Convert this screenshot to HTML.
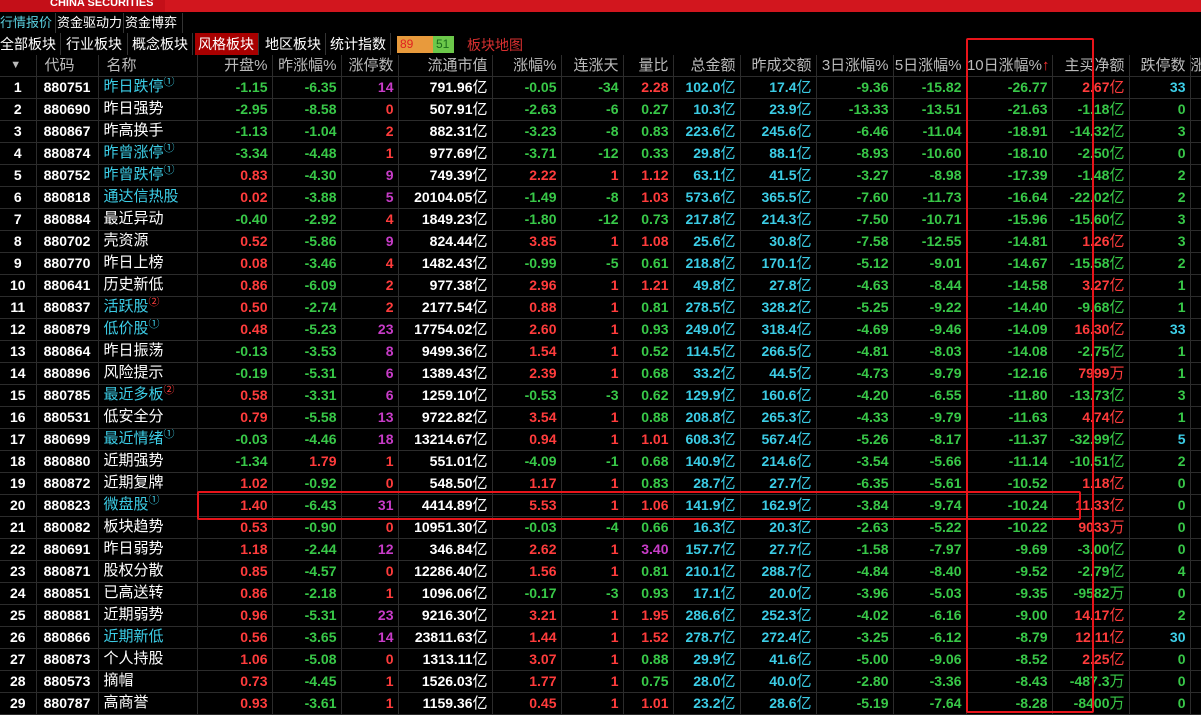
<!DOCTYPE html>
<html><head><meta charset="utf-8"><style>
*{margin:0;padding:0;box-sizing:border-box}
body{width:1201px;height:715px;background:#000;overflow:hidden;position:relative;font-family:"Liberation Sans","Noto Sans CJK SC",sans-serif;color:#fff}
.top{position:absolute;left:0;top:0;width:1201px;height:12px;background:#d2161e}
.logo{position:absolute;left:0;top:0;width:165px;height:12px;background:#c40f18;color:#fff;font-size:11px;font-weight:bold;line-height:6px;padding-left:50px;overflow:hidden}
.tabs1{position:absolute;top:13px;left:0;height:20px;font-size:13px;line-height:20px}
.tabs1 span,.tabs2 span{position:absolute;top:0;white-space:nowrap;border-right:1px solid #333;height:100%}
.tabs2{position:absolute;top:33px;left:0;height:22px;font-size:14px;line-height:22px}
table{position:absolute;top:55px;left:0;border-collapse:collapse;table-layout:fixed;width:1201px}
tr{height:22px}
td,th{border-right:1px solid #2c2c2c;border-bottom:1px solid #2c2c2c;height:22px;max-height:22px;line-height:20px;text-align:right;padding-top:0;padding-bottom:0;padding-right:4px;white-space:nowrap;overflow:hidden;font-size:14px;font-weight:bold}
th{height:21px;line-height:19px;color:#bbb;font-weight:normal;font-size:15px}
td:nth-child(1){text-align:center;padding:0}
td:nth-child(2){text-align:center;padding:0}
td:nth-child(3){text-align:left;padding-left:5px;font-weight:normal;font-size:15px}
th:nth-child(2),th:nth-child(3){text-align:left;padding-left:8px}
i{font-style:normal;font-weight:normal;font-size:15px;line-height:20px}
sup{font-size:11px;line-height:0;vertical-align:baseline;position:relative;top:-6px}
.r{color:#ff3c3c}.g{color:#38c848}.c{color:#3ccde6}.m{color:#c83cc8}
.box{position:absolute;border:2px solid #e8141a;border-radius:2px}
</style></head><body>
<div class="top"></div><div class="logo">CHINA SECURITIES</div>
<div class="tabs1"><span style="left:0;width:56px;color:#5ad0e0">行情报价</span><span style="left:57px;width:67px">资金驱动力</span><span style="left:125px;width:58px">资金博弈</span></div>
<div class="tabs2"><span style="left:0;width:61px">全部板块</span><span style="left:62px;width:66px;padding-left:4px">行业板块</span><span style="left:128px;width:65px;padding-left:4px">概念板块</span><span style="left:195px;width:64px;padding-left:3px;background:#a80000">风格板块</span><span style="left:261px;width:65px;padding-left:4px">地区板块</span><span style="left:326px;width:65px;padding-left:4px">统计指数</span></div>
<div style="position:absolute;left:397px;top:36px;width:36px;height:17px;background:#e89a3c;color:#e02020;font-size:12px;line-height:17px;padding-left:3px">89</div>
<div style="position:absolute;left:433px;top:36px;width:21px;height:17px;background:#6cc84a;color:#1a6a1a;font-size:12px;line-height:17px;padding-left:3px">51</div>
<div style="position:absolute;left:467px;top:34px;font-size:14px;line-height:22px;color:#d83030">板块地图</div>
<table>
<colgroup><col style="width:36px"><col style="width:62px"><col style="width:99px"><col style="width:75px"><col style="width:69px"><col style="width:57px"><col style="width:94px"><col style="width:69px"><col style="width:62px"><col style="width:50px"><col style="width:67px"><col style="width:76px"><col style="width:77px"><col style="width:73px"><col style="width:86px"><col style="width:77px"><col style="width:61px"><col style="width:11px"></colgroup>
<tr style="height:21px"><th style="text-align:center;font-size:11px">▼</th><th>代码</th><th>名称</th><th>开盘%</th><th>昨涨幅%</th><th>涨停数</th><th>流通市值</th><th>涨幅%</th><th>连涨天</th><th>量比</th><th>总金额</th><th>昨成交额</th><th>3日涨幅%</th><th>5日涨幅%</th><th style="padding-right:2px">10日涨幅%<span style="color:#f33">↑</span></th><th>主买净额</th><th>跌停数</th><th style="text-align:left;padding:0">涨</th></tr>
<tr><td>1</td><td>880751</td><td class="c">昨日跌停<sup>①</sup></td><td class="g">-1.15</td><td class="g">-6.35</td><td class="m">14</td><td>791.96<i>亿</i></td><td class="g">-0.05</td><td class="g">-34</td><td class="r">2.28</td><td class="c">102.0<i>亿</i></td><td class="c">17.4<i>亿</i></td><td class="g">-9.36</td><td class="g">-15.82</td><td class="g">-26.77</td><td class="r">2.67<i>亿</i></td><td class="c">33</td><td></td></tr>
<tr><td>2</td><td>880690</td><td>昨日强势</td><td class="g">-2.95</td><td class="g">-8.58</td><td class="r">0</td><td>507.91<i>亿</i></td><td class="g">-2.63</td><td class="g">-6</td><td class="g">0.27</td><td class="c">10.3<i>亿</i></td><td class="c">23.9<i>亿</i></td><td class="g">-13.33</td><td class="g">-13.51</td><td class="g">-21.63</td><td class="g">-1.18<i>亿</i></td><td class="g">0</td><td></td></tr>
<tr><td>3</td><td>880867</td><td>昨高换手</td><td class="g">-1.13</td><td class="g">-1.04</td><td class="r">2</td><td>882.31<i>亿</i></td><td class="g">-3.23</td><td class="g">-8</td><td class="g">0.83</td><td class="c">223.6<i>亿</i></td><td class="c">245.6<i>亿</i></td><td class="g">-6.46</td><td class="g">-11.04</td><td class="g">-18.91</td><td class="g">-14.32<i>亿</i></td><td class="g">3</td><td></td></tr>
<tr><td>4</td><td>880874</td><td class="c">昨曾涨停<sup>①</sup></td><td class="g">-3.34</td><td class="g">-4.48</td><td class="r">1</td><td>977.69<i>亿</i></td><td class="g">-3.71</td><td class="g">-12</td><td class="g">0.33</td><td class="c">29.8<i>亿</i></td><td class="c">88.1<i>亿</i></td><td class="g">-8.93</td><td class="g">-10.60</td><td class="g">-18.10</td><td class="g">-2.50<i>亿</i></td><td class="g">0</td><td></td></tr>
<tr><td>5</td><td>880752</td><td class="c">昨曾跌停<sup>①</sup></td><td class="r">0.83</td><td class="g">-4.30</td><td class="m">9</td><td>749.39<i>亿</i></td><td class="r">2.22</td><td class="r">1</td><td class="r">1.12</td><td class="c">63.1<i>亿</i></td><td class="c">41.5<i>亿</i></td><td class="g">-3.27</td><td class="g">-8.98</td><td class="g">-17.39</td><td class="g">-1.48<i>亿</i></td><td class="g">2</td><td></td></tr>
<tr><td>6</td><td>880818</td><td class="c">通达信热股</td><td class="r">0.02</td><td class="g">-3.88</td><td class="m">5</td><td>20104.05<i>亿</i></td><td class="g">-1.49</td><td class="g">-8</td><td class="r">1.03</td><td class="c">573.6<i>亿</i></td><td class="c">365.5<i>亿</i></td><td class="g">-7.60</td><td class="g">-11.73</td><td class="g">-16.64</td><td class="g">-22.02<i>亿</i></td><td class="g">2</td><td></td></tr>
<tr><td>7</td><td>880884</td><td>最近异动</td><td class="g">-0.40</td><td class="g">-2.92</td><td class="r">4</td><td>1849.23<i>亿</i></td><td class="g">-1.80</td><td class="g">-12</td><td class="g">0.73</td><td class="c">217.8<i>亿</i></td><td class="c">214.3<i>亿</i></td><td class="g">-7.50</td><td class="g">-10.71</td><td class="g">-15.96</td><td class="g">-15.60<i>亿</i></td><td class="g">3</td><td></td></tr>
<tr><td>8</td><td>880702</td><td>壳资源</td><td class="r">0.52</td><td class="g">-5.86</td><td class="m">9</td><td>824.44<i>亿</i></td><td class="r">3.85</td><td class="r">1</td><td class="r">1.08</td><td class="c">25.6<i>亿</i></td><td class="c">30.8<i>亿</i></td><td class="g">-7.58</td><td class="g">-12.55</td><td class="g">-14.81</td><td class="r">1.26<i>亿</i></td><td class="g">3</td><td></td></tr>
<tr><td>9</td><td>880770</td><td>昨日上榜</td><td class="r">0.08</td><td class="g">-3.46</td><td class="r">4</td><td>1482.43<i>亿</i></td><td class="g">-0.99</td><td class="g">-5</td><td class="g">0.61</td><td class="c">218.8<i>亿</i></td><td class="c">170.1<i>亿</i></td><td class="g">-5.12</td><td class="g">-9.01</td><td class="g">-14.67</td><td class="g">-15.58<i>亿</i></td><td class="g">2</td><td></td></tr>
<tr><td>10</td><td>880641</td><td>历史新低</td><td class="r">0.86</td><td class="g">-6.09</td><td class="r">2</td><td>977.38<i>亿</i></td><td class="r">2.96</td><td class="r">1</td><td class="r">1.21</td><td class="c">49.8<i>亿</i></td><td class="c">27.8<i>亿</i></td><td class="g">-4.63</td><td class="g">-8.44</td><td class="g">-14.58</td><td class="r">3.27<i>亿</i></td><td class="g">1</td><td></td></tr>
<tr><td>11</td><td>880837</td><td class="c">活跃股<sup class="r">②</sup></td><td class="r">0.50</td><td class="g">-2.74</td><td class="r">2</td><td>2177.54<i>亿</i></td><td class="r">0.88</td><td class="r">1</td><td class="g">0.81</td><td class="c">278.5<i>亿</i></td><td class="c">328.2<i>亿</i></td><td class="g">-5.25</td><td class="g">-9.22</td><td class="g">-14.40</td><td class="g">-9.68<i>亿</i></td><td class="g">1</td><td></td></tr>
<tr><td>12</td><td>880879</td><td class="c">低价股<sup>①</sup></td><td class="r">0.48</td><td class="g">-5.23</td><td class="m">23</td><td>17754.02<i>亿</i></td><td class="r">2.60</td><td class="r">1</td><td class="g">0.93</td><td class="c">249.0<i>亿</i></td><td class="c">318.4<i>亿</i></td><td class="g">-4.69</td><td class="g">-9.46</td><td class="g">-14.09</td><td class="r">16.30<i>亿</i></td><td class="c">33</td><td></td></tr>
<tr><td>13</td><td>880864</td><td>昨日振荡</td><td class="g">-0.13</td><td class="g">-3.53</td><td class="m">8</td><td>9499.36<i>亿</i></td><td class="r">1.54</td><td class="r">1</td><td class="g">0.52</td><td class="c">114.5<i>亿</i></td><td class="c">266.5<i>亿</i></td><td class="g">-4.81</td><td class="g">-8.03</td><td class="g">-14.08</td><td class="g">-2.75<i>亿</i></td><td class="g">1</td><td></td></tr>
<tr><td>14</td><td>880896</td><td>风险提示</td><td class="g">-0.19</td><td class="g">-5.31</td><td class="m">6</td><td>1389.43<i>亿</i></td><td class="r">2.39</td><td class="r">1</td><td class="g">0.68</td><td class="c">33.2<i>亿</i></td><td class="c">44.5<i>亿</i></td><td class="g">-4.73</td><td class="g">-9.79</td><td class="g">-12.16</td><td class="r">7999<i>万</i></td><td class="g">1</td><td></td></tr>
<tr><td>15</td><td>880785</td><td class="c">最近多板<sup class="r">②</sup></td><td class="r">0.58</td><td class="g">-3.31</td><td class="m">6</td><td>1259.10<i>亿</i></td><td class="g">-0.53</td><td class="g">-3</td><td class="g">0.62</td><td class="c">129.9<i>亿</i></td><td class="c">160.6<i>亿</i></td><td class="g">-4.20</td><td class="g">-6.55</td><td class="g">-11.80</td><td class="g">-13.73<i>亿</i></td><td class="g">3</td><td></td></tr>
<tr><td>16</td><td>880531</td><td>低安全分</td><td class="r">0.79</td><td class="g">-5.58</td><td class="m">13</td><td>9722.82<i>亿</i></td><td class="r">3.54</td><td class="r">1</td><td class="g">0.88</td><td class="c">208.8<i>亿</i></td><td class="c">265.3<i>亿</i></td><td class="g">-4.33</td><td class="g">-9.79</td><td class="g">-11.63</td><td class="r">4.74<i>亿</i></td><td class="g">1</td><td></td></tr>
<tr><td>17</td><td>880699</td><td class="c">最近情绪<sup>①</sup></td><td class="g">-0.03</td><td class="g">-4.46</td><td class="m">18</td><td>13214.67<i>亿</i></td><td class="r">0.94</td><td class="r">1</td><td class="r">1.01</td><td class="c">608.3<i>亿</i></td><td class="c">567.4<i>亿</i></td><td class="g">-5.26</td><td class="g">-8.17</td><td class="g">-11.37</td><td class="g">-32.99<i>亿</i></td><td class="c">5</td><td></td></tr>
<tr><td>18</td><td>880880</td><td>近期强势</td><td class="g">-1.34</td><td class="r">1.79</td><td class="r">1</td><td>551.01<i>亿</i></td><td class="g">-4.09</td><td class="g">-1</td><td class="g">0.68</td><td class="c">140.9<i>亿</i></td><td class="c">214.6<i>亿</i></td><td class="g">-3.54</td><td class="g">-5.66</td><td class="g">-11.14</td><td class="g">-10.51<i>亿</i></td><td class="g">2</td><td></td></tr>
<tr><td>19</td><td>880872</td><td>近期复牌</td><td class="r">1.02</td><td class="g">-0.92</td><td class="r">0</td><td>548.50<i>亿</i></td><td class="r">1.17</td><td class="r">1</td><td class="g">0.83</td><td class="c">28.7<i>亿</i></td><td class="c">27.7<i>亿</i></td><td class="g">-6.35</td><td class="g">-5.61</td><td class="g">-10.52</td><td class="r">1.18<i>亿</i></td><td class="g">0</td><td></td></tr>
<tr><td>20</td><td>880823</td><td class="c">微盘股<sup>①</sup></td><td class="r">1.40</td><td class="g">-6.43</td><td class="m">31</td><td>4414.89<i>亿</i></td><td class="r">5.53</td><td class="r">1</td><td class="r">1.06</td><td class="c">141.9<i>亿</i></td><td class="c">162.9<i>亿</i></td><td class="g">-3.84</td><td class="g">-9.74</td><td class="g">-10.24</td><td class="r">11.33<i>亿</i></td><td class="g">0</td><td></td></tr>
<tr><td>21</td><td>880082</td><td>板块趋势</td><td class="r">0.53</td><td class="g">-0.90</td><td class="r">0</td><td>10951.30<i>亿</i></td><td class="g">-0.03</td><td class="g">-4</td><td class="g">0.66</td><td class="c">16.3<i>亿</i></td><td class="c">20.3<i>亿</i></td><td class="g">-2.63</td><td class="g">-5.22</td><td class="g">-10.22</td><td class="r">9033<i>万</i></td><td class="g">0</td><td></td></tr>
<tr><td>22</td><td>880691</td><td>昨日弱势</td><td class="r">1.18</td><td class="g">-2.44</td><td class="m">12</td><td>346.84<i>亿</i></td><td class="r">2.62</td><td class="r">1</td><td class="m">3.40</td><td class="c">157.7<i>亿</i></td><td class="c">27.7<i>亿</i></td><td class="g">-1.58</td><td class="g">-7.97</td><td class="g">-9.69</td><td class="g">-3.00<i>亿</i></td><td class="g">0</td><td></td></tr>
<tr><td>23</td><td>880871</td><td>股权分散</td><td class="r">0.85</td><td class="g">-4.57</td><td class="r">0</td><td>12286.40<i>亿</i></td><td class="r">1.56</td><td class="r">1</td><td class="g">0.81</td><td class="c">210.1<i>亿</i></td><td class="c">288.7<i>亿</i></td><td class="g">-4.84</td><td class="g">-8.40</td><td class="g">-9.52</td><td class="g">-2.79<i>亿</i></td><td class="g">4</td><td></td></tr>
<tr><td>24</td><td>880851</td><td>已高送转</td><td class="r">0.86</td><td class="g">-2.18</td><td class="r">1</td><td>1096.06<i>亿</i></td><td class="g">-0.17</td><td class="g">-3</td><td class="g">0.93</td><td class="c">17.1<i>亿</i></td><td class="c">20.0<i>亿</i></td><td class="g">-3.96</td><td class="g">-5.03</td><td class="g">-9.35</td><td class="g">-9582<i>万</i></td><td class="g">0</td><td></td></tr>
<tr><td>25</td><td>880881</td><td>近期弱势</td><td class="r">0.96</td><td class="g">-5.31</td><td class="m">23</td><td>9216.30<i>亿</i></td><td class="r">3.21</td><td class="r">1</td><td class="r">1.95</td><td class="c">286.6<i>亿</i></td><td class="c">252.3<i>亿</i></td><td class="g">-4.02</td><td class="g">-6.16</td><td class="g">-9.00</td><td class="r">14.17<i>亿</i></td><td class="g">2</td><td></td></tr>
<tr><td>26</td><td>880866</td><td class="c">近期新低</td><td class="r">0.56</td><td class="g">-3.65</td><td class="m">14</td><td>23811.63<i>亿</i></td><td class="r">1.44</td><td class="r">1</td><td class="r">1.52</td><td class="c">278.7<i>亿</i></td><td class="c">272.4<i>亿</i></td><td class="g">-3.25</td><td class="g">-6.12</td><td class="g">-8.79</td><td class="r">12.11<i>亿</i></td><td class="c">30</td><td></td></tr>
<tr><td>27</td><td>880873</td><td>个人持股</td><td class="r">1.06</td><td class="g">-5.08</td><td class="r">0</td><td>1313.11<i>亿</i></td><td class="r">3.07</td><td class="r">1</td><td class="g">0.88</td><td class="c">29.9<i>亿</i></td><td class="c">41.6<i>亿</i></td><td class="g">-5.00</td><td class="g">-9.06</td><td class="g">-8.52</td><td class="r">2.25<i>亿</i></td><td class="g">0</td><td></td></tr>
<tr><td>28</td><td>880573</td><td>摘帽</td><td class="r">0.73</td><td class="g">-4.45</td><td class="r">1</td><td>1526.03<i>亿</i></td><td class="r">1.77</td><td class="r">1</td><td class="g">0.75</td><td class="c">28.0<i>亿</i></td><td class="c">40.0<i>亿</i></td><td class="g">-2.80</td><td class="g">-3.36</td><td class="g">-8.43</td><td class="g">-487.3<i>万</i></td><td class="g">0</td><td></td></tr>
<tr><td>29</td><td>880787</td><td>高商誉</td><td class="r">0.93</td><td class="g">-3.61</td><td class="r">1</td><td>1159.36<i>亿</i></td><td class="r">0.45</td><td class="r">1</td><td class="r">1.01</td><td class="c">23.2<i>亿</i></td><td class="c">28.6<i>亿</i></td><td class="g">-5.19</td><td class="g">-7.64</td><td class="g">-8.28</td><td class="g">-8400<i>万</i></td><td class="g">0</td><td></td></tr>
</table>
<div class="box" style="left:966px;top:38px;width:128px;height:675px"></div>
<div class="box" style="left:197px;top:491px;width:884px;height:29px"></div>
</body></html>
